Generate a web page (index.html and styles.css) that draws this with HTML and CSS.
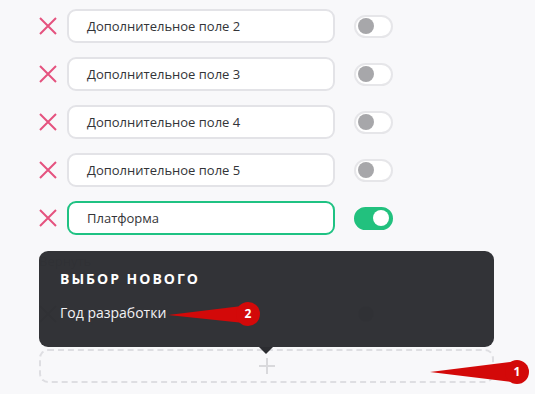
FILE: index.html
```html
<!DOCTYPE html>
<html lang="ru">
<head>
    <meta charset="UTF-8">
    <title>Поля</title>
    <link rel="stylesheet" href="styles.css">
</head>
<body>
    <div class="fields">
        <div class="field-row">
            <svg class="remove" viewBox="0 0 18 18"><path d="M1 1L17 17M17 1L1 17"/></svg>
            <div class="field-input">Дополнительное поле 2</div>
            <div class="toggle"><span class="knob"></span></div>
        </div>
        <div class="field-row">
            <svg class="remove" viewBox="0 0 18 18"><path d="M1 1L17 17M17 1L1 17"/></svg>
            <div class="field-input">Дополнительное поле 3</div>
            <div class="toggle"><span class="knob"></span></div>
        </div>
        <div class="field-row">
            <svg class="remove" viewBox="0 0 18 18"><path d="M1 1L17 17M17 1L1 17"/></svg>
            <div class="field-input">Дополнительное поле 4</div>
            <div class="toggle"><span class="knob"></span></div>
        </div>
        <div class="field-row">
            <svg class="remove" viewBox="0 0 18 18"><path d="M1 1L17 17M17 1L1 17"/></svg>
            <div class="field-input">Дополнительное поле 5</div>
            <div class="toggle"><span class="knob"></span></div>
        </div>
        <div class="field-row">
            <svg class="remove" viewBox="0 0 18 18"><path d="M1 1L17 17M17 1L1 17"/></svg>
            <div class="field-input active">Платформа</div>
            <div class="toggle on"><span class="knob"></span></div>
        </div>
        <div class="restore-row">Вернуть</div>
        <div class="field-row">
            <svg class="remove muted" viewBox="0 0 18 18"><path d="M1 1L17 17M17 1L1 17"/></svg>
            <div class="field-input"></div>
            <div class="toggle"><span class="knob"></span></div>
        </div>
        <div class="add-field">
            <svg class="plus" viewBox="0 0 18 18"><path d="M9 1V17M1 9H17"/></svg>
        </div>

        <div class="picker">
            <div class="picker-title">Выбор нового</div>
            <div class="picker-item">Год разработки</div>
        </div>
    </div>

    <svg class="markers" width="535" height="394" viewBox="0 0 535 394">
        <path d="M168 315 L242 306 L244 323 Z"/>
        <circle cx="248" cy="314" r="12"/>
        <text x="248" y="318">2</text>
        <path d="M430 372 L511 362 L512 382 Z"/>
        <circle cx="517" cy="372" r="12"/>
        <text x="517" y="376">1</text>
    </svg>
</body>
</html>
```

FILE: styles.css
```css
body {
    margin: 0;
    background-color: #f8f8fa;
    font-family: "Open Sans", "Noto Sans", sans-serif;
    color: #333438;
    width: 535px;
    height: 394px;
    overflow: hidden;
    position: relative;
}
.fields {
    position: relative;
    padding: 9px 0 0 39px;
}
.field-row {
    display: flex;
    align-items: center;
    height: 34px;
    margin-bottom: 14px;
}
.remove {
    flex-shrink: 0;
    width: 18px;
    height: 18px;
    margin-right: 10px;
    stroke: #e5527e;
    stroke-width: 2;
    fill: none;
}
.remove.muted {
    stroke: #888;
}
.field-input {
    flex-shrink: 0;
    width: 268px;
    height: 34px;
    box-sizing: border-box;
    border: 2px solid #e3e3e7;
    border-radius: 9px;
    background: white;
    padding: 0 18px;
    font-size: 13px;
    line-height: 30px;
}
.field-input.active {
    border-color: #1fc283;
}
.toggle {
    flex-shrink: 0;
    width: 39px;
    height: 23px;
    box-sizing: border-box;
    margin-left: 19px;
    border: 2px solid #e6e6e9;
    border-radius: 12px;
    background: white;
    display: flex;
    align-items: center;
    padding: 0 2px;
}
.knob {
    width: 16px;
    height: 16px;
    border-radius: 50%;
    background: #a7a7aa;
}
.toggle.on {
    background: #22c17e;
    border-color: #22c17e;
    justify-content: flex-end;
}
.toggle.on .knob {
    background: white;
}
.restore-row {
    height: 34px;
    margin-bottom: 14px;
    font-size: 13px;
    line-height: 16px;
    padding-top: 4px;
    box-sizing: border-box;
    color: #888;
}
.add-field {
    width: 455px;
    height: 34px;
    box-sizing: border-box;
    margin-top: 18px;
    border: 2px dashed #dedee2;
    border-radius: 9px;
    display: flex;
    align-items: center;
    justify-content: center;
}
.plus {
    width: 18px;
    height: 18px;
    stroke: #d9d9dc;
    stroke-width: 2;
    fill: none;
}
.picker {
    position: absolute;
    left: 39px;
    top: 251px;
    width: 455px;
    height: 96px;
    box-sizing: border-box;
    padding: 18px 21px;
    border-radius: 9px;
    background: rgba(46, 47, 51, 0.98);
    color: white;
}
.picker::after {
    content: "";
    position: absolute;
    left: 220px;
    bottom: -7px;
    border-left: 7px solid transparent;
    border-right: 7px solid transparent;
    border-top: 7px solid #2c2d31;
}
.picker-title {
    font-weight: 700;
    font-size: 14px;
    letter-spacing: 2px;
    text-transform: uppercase;
    line-height: 20px;
}
.picker-item {
    margin-top: 14px;
    font-size: 14px;
    line-height: 20px;
    color: #f2f2f4;
}
.markers {
    position: absolute;
    left: 0;
    top: 0;
}
.markers path, .markers circle {
    fill: #d30909;
}
.markers text {
    fill: white;
    font-family: "Open Sans", sans-serif;
    font-size: 12px;
    font-weight: 700;
    text-anchor: middle;
}
```
